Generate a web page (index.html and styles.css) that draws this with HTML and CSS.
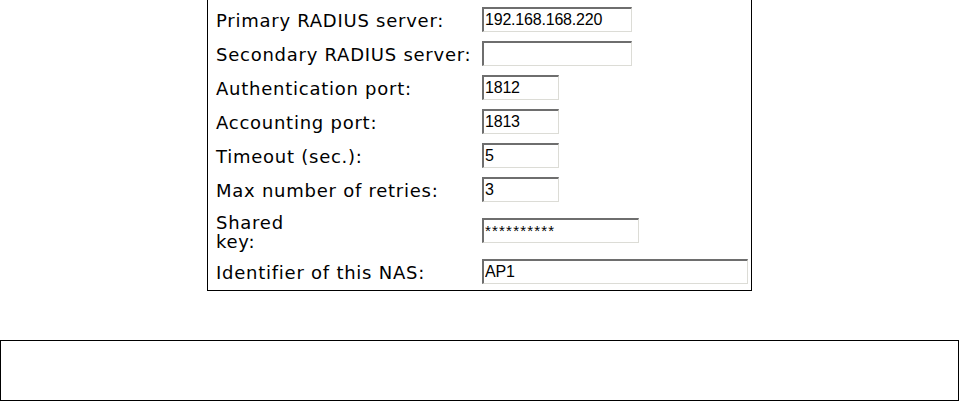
FILE: index.html
```html
<!DOCTYPE html>
<html>
<head>
<meta charset="utf-8">
<link rel="stylesheet" href="styles.css">
</head>
<body>
<div class="page">
  <form class="radius">
    <label class="lbl" for="prim">Primary RADIUS server:</label>
    <div class="cell"><input id="prim" class="fld w150" type="text" value="192.168.168.220"></div>

    <label class="lbl" for="sec">Secondary RADIUS server:</label>
    <div class="cell"><input id="sec" class="fld w150" type="text" value=""></div>

    <label class="lbl" for="auth">Authentication port:</label>
    <div class="cell"><input id="auth" class="fld w77" type="text" value="1812"></div>

    <label class="lbl" for="acct">Accounting port:</label>
    <div class="cell"><input id="acct" class="fld w77" type="text" value="1813"></div>

    <label class="lbl" for="tmo">Timeout (sec.):</label>
    <div class="cell"><input id="tmo" class="fld w77" type="text" value="5"></div>

    <label class="lbl" for="ret">Max number of retries:</label>
    <div class="cell"><input id="ret" class="fld w77" type="text" value="3"></div>

    <label class="lbl tall" for="key">Shared<br>key:</label>
    <div class="cell"><input id="key" class="fld w157 pw" type="text" value="**********"></div>

    <label class="lbl" for="nas">Identifier of this NAS:</label>
    <div class="cell"><input id="nas" class="fld w266" type="text" value="AP1"></div>
  </form>
  <div class="msg"></div>
</div>
</body>
</html>
```

FILE: styles.css
```css
html, body {
  margin: 0;
  padding: 0;
  background: #fff;
}
.page {
  width: 960px;
  height: 401px;
  overflow: hidden;
  display: flex;
  flex-direction: column;
}
.radius {
  margin: -1px 0 0 207px;
  width: 543px;
  border: 1px solid #000;
  padding: 2px 0 2px 0;
  display: grid;
  grid-template-columns: 274px 1fr;
  grid-template-rows: 34px 34px 34px 34px 34px 34px 48px 34px;
  font-family: "DejaVu Sans", Verdana, sans-serif;
  font-size: 18px;
  letter-spacing: 0.75px;
  color: #000;
}
.lbl {
  padding: 3px 0 0 8px;
  display: flex;
  align-items: center;
  line-height: 18px;
  white-space: nowrap;
}
.tall {
  line-height: 19px;
}
.cell {
  display: flex;
  align-items: center;
}
.fld {
  box-sizing: border-box;
  height: 25px;
  margin: 0;
  padding: 1px 1px 0 1px;
  border-style: solid;
  border-width: 2px 1px 1px 2px;
  border-top-color: #6e6e6e;
  border-left-color: #6e6e6e;
  border-right-color: #dcdcd6;
  border-bottom-color: #dcdcd6;
  background: #fff;
  font-family: "Liberation Sans", Arial, sans-serif;
  font-size: 16px;
  letter-spacing: -0.2px;
  color: #000;
  outline: none;
}
.pw {
  font-size: 15px;
  letter-spacing: 1.2px;
  padding-bottom: 2px;
}
.w150 { width: 150px; }
.w77 { width: 77px; }
.w157 { width: 157px; }
.w266 { width: 266px; }
.msg {
  margin-top: 49px;
  width: 957px;
  height: 59px;
  border: 1px solid #000;
}
```
